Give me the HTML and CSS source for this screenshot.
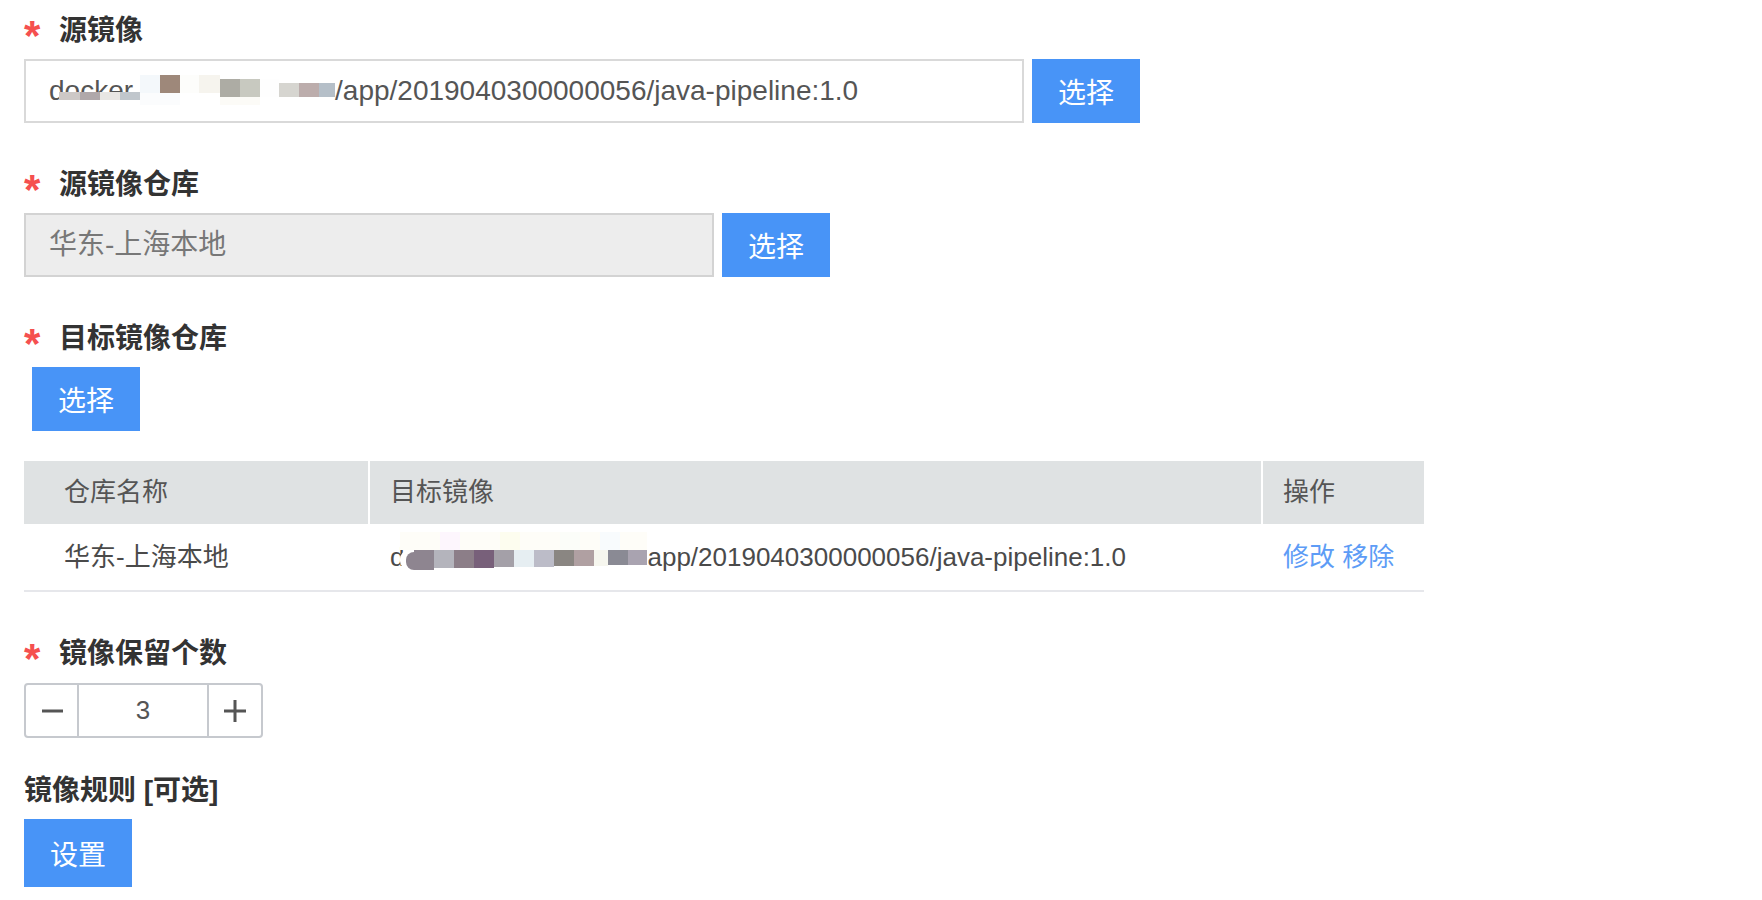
FILE: index.html
```html
<!DOCTYPE html>
<html lang="zh-CN">
<head>
<meta charset="utf-8">
<title>镜像同步</title>
<link rel="stylesheet" href="styles.css">
</head>
<body>
<div class="form">
  <div class="field">
    <div class="label"><span class="req">*</span><span>源镜像</span></div>
    <div class="row">
      <div class="input">docker<svg class="mosaic-a" width="276" height="30" viewBox="0 0 276 30"><rect x="0" y="17" width="81" height="13" fill="#fff"/><rect x="81" y="0" width="195" height="30" fill="#fff"/><rect x="0" y="17" width="21" height="8" fill="#cdc8c6"/><rect x="21" y="17" width="20" height="8" fill="#b0a8aa"/><rect x="41" y="17" width="20" height="8" fill="#e8e6e4"/><rect x="61" y="17" width="20" height="8" fill="#c0c6cc"/><rect x="81" y="0" width="20" height="24" fill="#f4f8fb"/><rect x="101" y="0" width="20" height="18" fill="#9e887a"/><rect x="121" y="0" width="19" height="18" fill="#fdfdfb"/><rect x="140" y="0" width="21" height="18" fill="#f6f4ee"/><rect x="161" y="4" width="20" height="18" fill="#adaca4"/><rect x="181" y="4" width="20" height="18" fill="#c8c9c0"/><rect x="201" y="4" width="19" height="18" fill="#fefefe"/><rect x="220" y="8" width="20" height="14" fill="#d6d5d0"/><rect x="240" y="8" width="20" height="14" fill="#bcadac"/><rect x="260" y="8" width="16" height="14" fill="#b5bfc8"/><rect x="81" y="18" width="40" height="12" fill="#fbfcfd"/><rect x="161" y="22" width="40" height="8" fill="#fcfbf7"/></svg>/app/2019040300000056/java-pipeline:1.0</div>
      <button class="btn">选择</button>
    </div>
  </div>

  <div class="field">
    <div class="label"><span class="req">*</span><span>源镜像仓库</span></div>
    <div class="row">
      <div class="input disabled">华东-上海本地</div>
      <button class="btn">选择</button>
    </div>
  </div>

  <div class="field">
    <div class="label"><span class="req">*</span><span>目标镜像仓库</span></div>
    <button class="btn indent">选择</button>
    <div class="tbl">
      <div class="tr thead">
        <div class="cell first">仓库名称</div>
        <div class="cell">目标镜像</div>
        <div class="cell">操作</div>
      </div>
      <div class="tr tbody">
        <div class="cell first">华东-上海本地</div>
        <div class="cell">d<svg class="mosaic-b" width="247" height="43" viewBox="0 0 247 43"><rect x="0" y="2" width="247" height="18" fill="#fefdf8"/><rect x="40" y="2" width="20" height="18" fill="#fdf6fd"/><rect x="100" y="2" width="20" height="18" fill="#fdfdef"/><rect x="160" y="2" width="20" height="18" fill="#fbfdf9"/><rect x="200" y="2" width="20" height="18" fill="#f8fbfd"/><rect x="0" y="20" width="247" height="20" rx="9" fill="#fff"/><rect x="6" y="22" width="18" height="18" rx="8" fill="#8e8590"/><rect x="14" y="20" width="20" height="20" fill="#8e8590"/><rect x="34" y="20" width="20" height="18" fill="#b4b4bc"/><rect x="54" y="20" width="20" height="18" fill="#8c7e88"/><rect x="74" y="20" width="20" height="18" fill="#78607a"/><rect x="94" y="20" width="20" height="17" fill="#a4a0a8"/><rect x="114" y="20" width="20" height="17" fill="#e6eef2"/><rect x="134" y="20" width="20" height="17" fill="#bcbcc8"/><rect x="154" y="20" width="20" height="16" fill="#8a8682"/><rect x="174" y="20" width="20" height="16" fill="#b0a0a2"/><rect x="194" y="20" width="14" height="16" fill="#f6f6ee"/><rect x="208" y="20" width="20" height="15" fill="#8a8a94"/><rect x="228" y="20" width="19" height="15" fill="#a9a3b0"/></svg>app/2019040300000056/java-pipeline:1.0</div>
        <div class="cell"><a class="link">修改</a> <a class="link">移除</a></div>
      </div>
    </div>
  </div>

  <div class="field">
    <div class="label"><span class="req">*</span><span>镜像保留个数</span></div>
    <div class="stepper">
      <span class="step minus"><svg width="22" height="22" viewBox="0 0 22 22"><path d="M1 11H22" stroke="#555" stroke-width="3"/></svg></span>
      <span class="step-val">3</span>
      <span class="step plus"><svg width="22" height="22" viewBox="0 0 22 22"><path d="M0 11H22M11 0V22" stroke="#555" stroke-width="3"/></svg></span>
    </div>
  </div>

  <div class="field last">
    <div class="label">镜像规则 [可选]</div>
    <button class="btn tall">设置</button>
  </div>
</div>
</body>
</html>
```

FILE: styles.css
```css
* {
  box-sizing: border-box;
}

html, body {
  background: #ffffff;
}

body {
  margin: 0;
  padding: 12px 0 0 24px;
  font-family: "Liberation Sans", "Noto Sans CJK SC", sans-serif;
  color: #333333;
}

.field {
  display: flex;
  flex-direction: column;
  align-items: flex-start;
  gap: 11px;
  margin-bottom: 43px;
}

.field.last {
  margin-bottom: 0;
}

.label {
  display: flex;
  align-items: center;
  height: 36px;
  padding-bottom: 4px;
  font-size: 28px;
  font-weight: 700;
  color: #333333;
  white-space: nowrap;
}

.req {
  width: 35px;
  font-size: 42px;
  line-height: 1;
  padding-top: 16px;
  color: #f5504f;
}

.row {
  display: flex;
  gap: 8px;
}

.input {
  width: 1000px;
  height: 64px;
  border: 2px solid #d9d9d9;
  padding: 0 23px;
  font-size: 28px;
  line-height: 60px;
  color: #555555;
  white-space: nowrap;
  overflow: hidden;
}

.input.disabled {
  width: 690px;
  background: #ededed;
  border-color: #d3d3d3;
  color: #777777;
}

.mosaic-a {
  margin-left: -74px;
  vertical-align: -5px;
}

.btn {
  width: 108px;
  height: 64px;
  border: 0;
  padding: 0;
  background: #4894f7;
  color: #ffffff;
  font-family: "Liberation Sans", "Noto Sans CJK SC", sans-serif;
  font-size: 28px;
}

.btn.indent {
  margin-left: 8px;
}

.btn.tall {
  height: 68px;
}

.tbl {
  width: 1400px;
  margin-top: 19px;
}

.tr {
  display: grid;
  grid-template-columns: 344px 891px 161px;
  column-gap: 2px;
  font-size: 26px;
}

.thead {
  height: 63px;
}

.thead .cell {
  background: #dfe2e3;
  color: #555555;
  line-height: 63px;
}

.tbody {
  height: 68px;
  border-bottom: 2px solid #e6e7eb;
}

.tbody .cell {
  line-height: 66px;
  color: #4a4a4a;
}

.cell {
  padding-left: 20px;
  white-space: nowrap;
}

.cell.first {
  padding-left: 40px;
}

.mosaic-b {
  margin-left: -4px;
  vertical-align: -7px;
}

.link {
  color: #5d9cf6;
  cursor: pointer;
}

.stepper {
  display: flex;
  width: 239px;
  height: 55px;
  border: 2px solid #c6c9ce;
  border-radius: 4px;
  margin-top: 1px;
}

.step {
  display: flex;
  align-items: center;
  justify-content: center;
}

.minus {
  width: 53px;
  border-right: 2px solid #c6c9ce;
}

.plus {
  width: 52px;
}

.step-val {
  width: 130px;
  border-right: 2px solid #c6c9ce;
  text-align: center;
  font-size: 26px;
  line-height: 51px;
  color: #555555;
}

.field:nth-child(4) {
  margin-bottom: 34px;
}
```
